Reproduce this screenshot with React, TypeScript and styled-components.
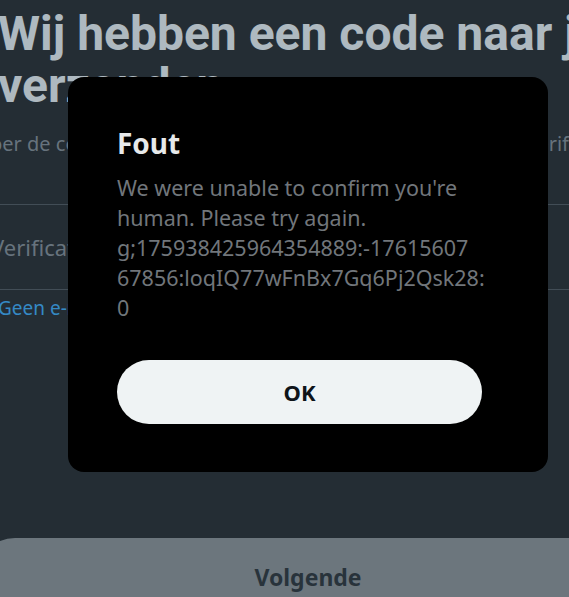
import styled, { createGlobalStyle } from 'styled-components';

const GlobalStyle = createGlobalStyle`
  html, body {
    margin: 0;
    padding: 0;
    background: #000;
    overflow: hidden;
  }
  * {
    box-sizing: border-box;
  }
`;

const FONT = `"Segoe UI", "Noto Sans", "Open Sans", sans-serif`;

const Page = styled.div`
  position: relative;
  width: 569px;
  height: 597px;
  overflow: hidden;
  background: #000;
  font-family: ${FONT};
  color: #e7e9ea;
`;

const Content = styled.div`
  display: flex;
  flex-direction: column;
  width: 680px;
  margin-left: -2px;
  padding-top: 8px;
`;

const Heading = styled.h1`
  margin: 0;
  width: 612px;
  font-family: Roboto, ${FONT};
  font-size: 48px;
  line-height: 52px;
  font-weight: 700;
  color: #e7e9ea;
`;

const Subtitle = styled.p`
  margin: 18px 0 0 -8px;
  font-size: 20px;
  line-height: 28px;
  color: #71767b;
  white-space: nowrap;
`;

const Field = styled.div`
  display: flex;
  align-items: center;
  margin: 46px 0 0 -22px;
  height: 86px;
  width: 680px;
  border: 1px solid #333639;
  border-radius: 6px;
  padding: 0 14px;
`;

const Placeholder = styled.span`
  font-size: 22px;
  color: #71767b;
`;

const Link = styled.a`
  margin-top: 6px;
  font-size: 19px;
  line-height: 24px;
  color: #1d9bf0;
  text-decoration: none;
`;

const NextButton = styled.button`
  position: absolute;
  left: -24px;
  top: 538px;
  width: 664px;
  height: 78px;
  border: none;
  border-radius: 39px;
  background: #eff3f4;
  opacity: 0.5;
  font-family: ${FONT};
  font-size: 23px;
  font-weight: 700;
  color: #0f1419;
`;

const Overlay = styled.div`
  position: absolute;
  inset: 0;
  background: rgba(91, 112, 131, 0.4);
  display: flex;
  align-items: flex-start;
  padding: 77px 0 0 68px;
`;

const Modal = styled.div`
  width: 480px;
  height: 395px;
  background: #000;
  border-radius: 16px;
  padding: 48px 49px;
  display: flex;
  flex-direction: column;
`;

const Title = styled.h2`
  margin: 0;
  font-size: 28px;
  line-height: 36px;
  font-weight: 700;
  color: #e7e9ea;
`;

const Body = styled.p`
  margin: 12px 0 0;
  font-size: 21.5px;
  line-height: 30px;
  color: #71767b;
  white-space: nowrap;
`;

const OkButton = styled.button`
  margin-top: 37px;
  width: 365px;
  height: 64px;
  border: none;
  border-radius: 32px;
  background: #eff3f4;
  font-family: ${FONT};
  font-size: 22px;
  font-weight: 700;
  color: #0f1419;
  cursor: pointer;
`;

const bodyLines = [
  "We were unable to confirm you're",
  'human. Please try again.',
  'g;175938425964354889:-17615607',
  '67856:loqIQ77wFnBx7Gq6Pj2Qsk28:',
  '0',
];

const App = () => {
  return (
    <>
      <GlobalStyle />
      <Page>
        <Content>
          <Heading>Wij hebben een code naar je verzonden</Heading>
          <Subtitle>per de code hieronder in om nu je nieuwe e-mailadres te verifiëren.</Subtitle>
          <Field>
            <Placeholder>Verificatiecode</Placeholder>
          </Field>
          <Link href="#">Geen e-mail ontvangen?</Link>
        </Content>
        <NextButton>Volgende</NextButton>
        <Overlay>
          <Modal role="alertdialog">
            <Title>Fout</Title>
            <Body>
              {bodyLines.map((line, i) => (
                <span key={i}>
                  {line}
                  <br />
                </span>
              ))}
            </Body>
            <OkButton>OK</OkButton>
          </Modal>
        </Overlay>
      </Page>
    </>
  );
};

export default App;
